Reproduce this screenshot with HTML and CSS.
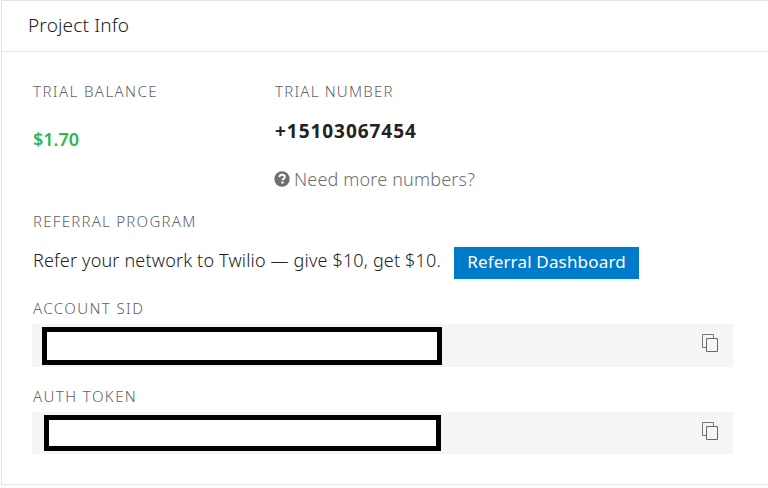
FILE: index.html
```html
<!DOCTYPE html>
<html lang="en">
<head>
<meta charset="utf-8">
<title>Project Info</title>
<link rel="stylesheet" href="styles.css">
</head>
<body>
<main class="panel">
  <header class="panel-header"><h1 class="title">Project Info</h1></header>
  <section class="stats">
    <div class="balance">
      <h2 class="label">TRIAL BALANCE</h2>
      <p class="amount">$1.70</p>
    </div>
    <div class="number">
      <h2 class="label">TRIAL NUMBER</h2>
      <p class="phone">+15103067454</p>
      <p class="help">
        <svg class="help-icon" viewBox="0 0 16 16" width="16" height="16"><circle cx="8" cy="8" r="7.7" fill="#6f6f73"/><path d="M5.4 6.1C5.5 4.5 6.6 3.7 8.1 3.7c1.6 0 2.7.9 2.7 2.2 0 1.7-2.2 1.7-2.2 3.4" fill="none" stroke="#fff" stroke-width="2"/><rect x="7.4" y="10.5" width="2.2" height="2.1" fill="#fff"/></svg>
        <span>Need more numbers?</span>
      </p>
    </div>
  </section>
  <section class="referral">
    <h2 class="label">REFERRAL PROGRAM</h2>
    <div class="referral-row">
      <p class="copy">Refer your network to Twilio — give $10, get $10.</p>
      <button class="button">Referral Dashboard</button>
    </div>
  </section>
  <section class="credential account">
    <h2 class="label">ACCOUNT SID</h2>
    <div class="field">
      <div class="redacted"></div>
      <svg class="copy-icon" viewBox="0 0 17 19" width="17" height="19"><path d="M.5 .5h11v13H.5z" fill="#f5f5f5" stroke="#77757c"/><path d="M4.5 4.5h11v13h-11z" fill="#f5f5f5" stroke="#69686f"/></svg>
    </div>
  </section>
  <section class="credential token">
    <h2 class="label">AUTH TOKEN</h2>
    <div class="field">
      <div class="redacted"></div>
      <svg class="copy-icon" viewBox="0 0 17 19" width="17" height="19"><path d="M.5 .5h11v13H.5z" fill="#f5f5f5" stroke="#77757c"/><path d="M4.5 4.5h11v13h-11z" fill="#f5f5f5" stroke="#69686f"/></svg>
    </div>
  </section>
</main>
</body>
</html>
```
FILE: styles.css
```css
* { box-sizing: border-box; }
body { margin: 0; background: #fff; color: #222; font-family: "Noto Sans", "Open Sans", sans-serif; font-size: 18px; font-weight: 300; letter-spacing: .17px; overflow: hidden; }
h1, h2, p { margin: 0; font-weight: inherit; }
.panel { height: 485px; margin-left: 1px; border: 1px solid #e4e4e4; border-right: 0; }
.panel-header { height: 51px; padding: 10px 26px; border-bottom: 1px solid #e4e4e4; }
.title { font-size: 19px; line-height: 28px; white-space: nowrap; }
.label { height: 20px; font-size: 15px; line-height: 20px; color: #606066; white-space: nowrap; letter-spacing: 1.43px; }
.number .label { letter-spacing: 1.22px; }
.referral .label { letter-spacing: 1.26px; }
.stats { display: grid; grid-template-columns: 242px 1fr; height: 129px; padding: 29px 0 0 31px; }
.amount { margin-top: 24px; line-height: 28px; font-weight: 600; letter-spacing: 0; color: #2db84d; }
.phone { margin-top: 16px; line-height: 28px; font-size: 19px; font-weight: 700; letter-spacing: .95px; }
.help { display: flex; align-items: center; gap: 4px; margin-top: 20px; line-height: 28px; color: #707074; white-space: nowrap; margin-left: -1px; }
.referral { height: 87px; padding: 30px 0 0 31px; }
.referral-row { display: flex; align-items: flex-start; margin-top: 15px; }
.copy { width: 421px; line-height: 28px; white-space: nowrap; }
.button { width: 185px; height: 32px; margin-top: 1px; padding: 0 0 2px; border: 0; background: #007bc9; color: #fff; font: 400 17px/30px "Noto Sans", sans-serif; letter-spacing: .17px; white-space: nowrap; }
.credential { width: 731px; padding-left: 30px; }
.credential .label { padding-left: 1px; }
.account { margin-top: 30px; height: 88px; }
.field { display: flex; justify-content: space-between; margin-top: 6px; padding: 3px 14px 0 10px; height: 43px; background: #f5f5f5; }
.redacted { width: 400px; height: 38px; border: 5px solid #000; background: #fff; }
.copy-icon { margin-top: 7px; }
.token .field { height: 42px; padding-left: 12px; }
.token .redacted { width: 397px; height: 36px; }
```
